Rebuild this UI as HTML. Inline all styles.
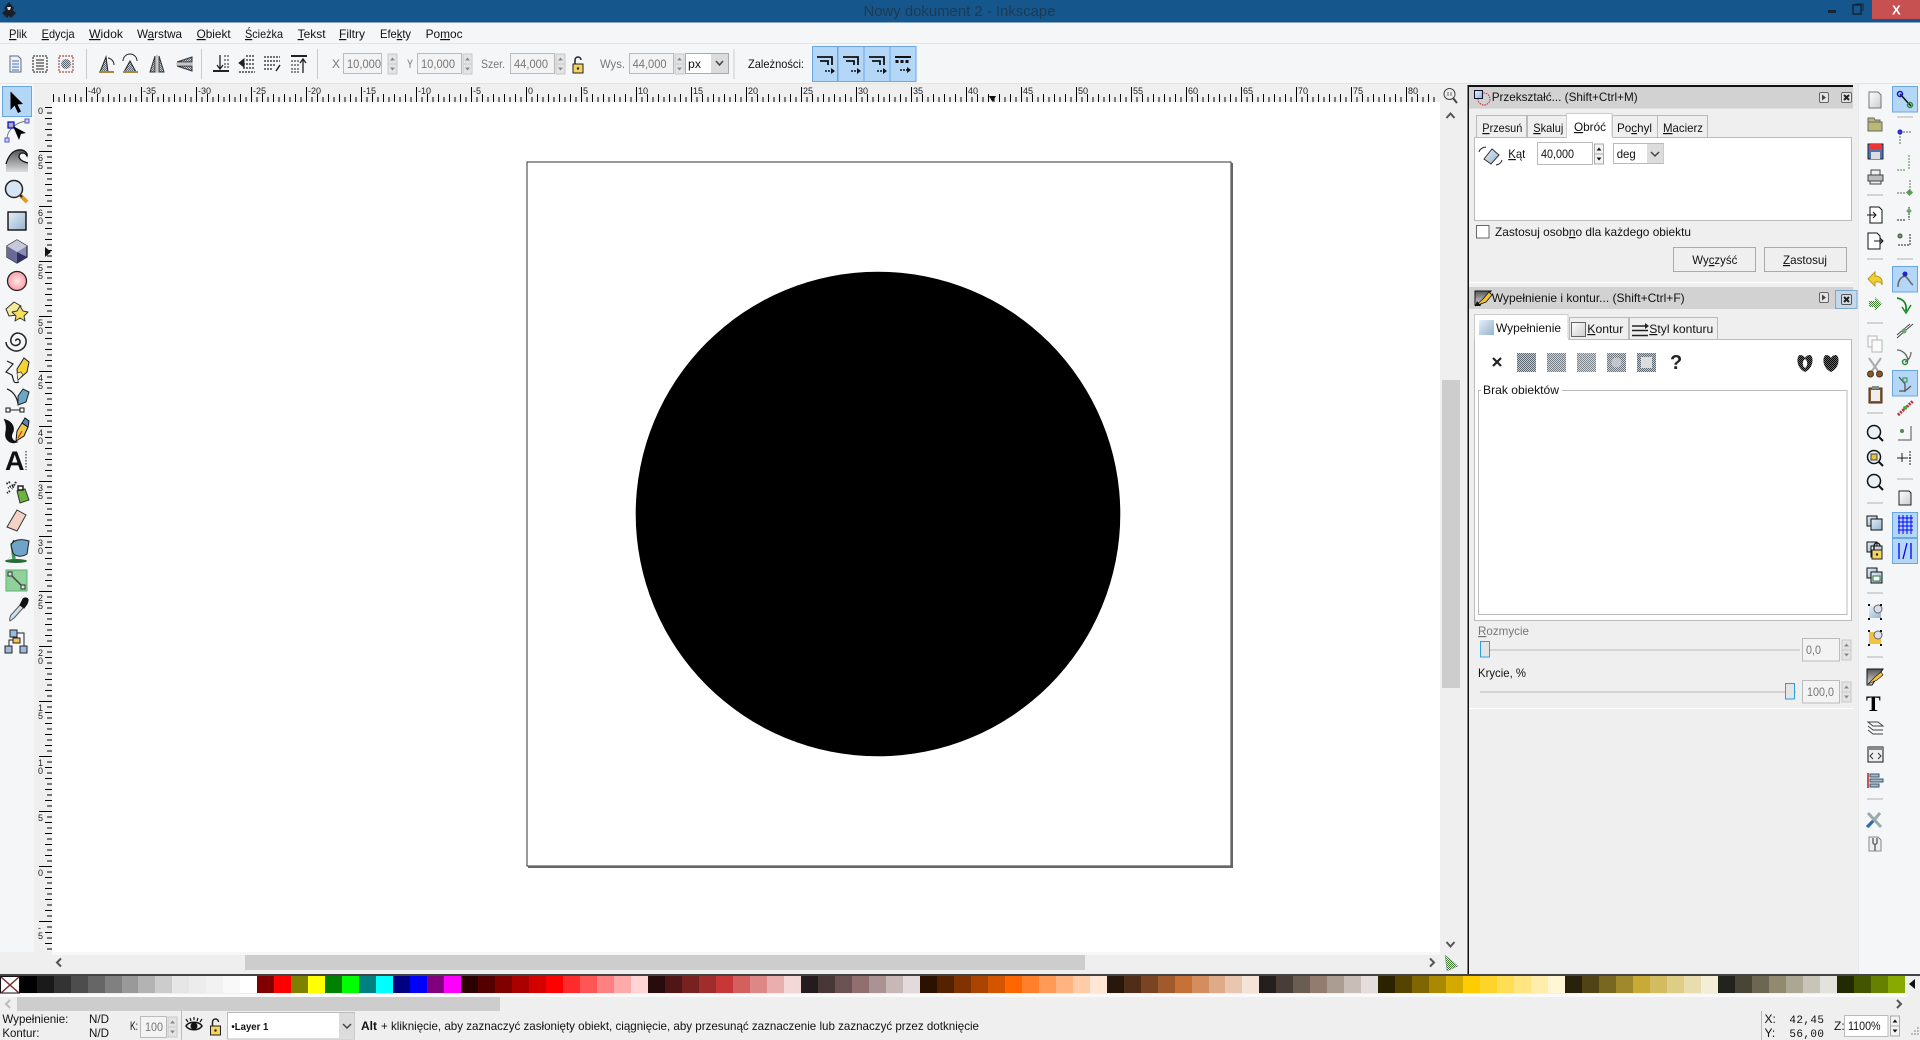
<!DOCTYPE html>
<html lang="pl"><head><meta charset="utf-8"><title>Nowy dokument 2 - Inkscape</title>
<style>
html,body{margin:0;padding:0;width:1920px;height:1040px;overflow:hidden;background:#efefef}
svg#m{position:absolute;left:0;top:0}
text{font-family:"Liberation Sans",sans-serif;font-size:12px;fill:#111;white-space:pre}
.g{fill:#777}
.r{font-size:9px;fill:#222}
.u{text-decoration:underline}
#p{position:absolute;left:19.6px;top:976px;width:1885px;height:17px;display:flex}
#p i{flex:1;display:block}
</style></head><body>
<svg id="m" width="1920" height="1040" viewBox="0 0 1920 1040" xmlns="http://www.w3.org/2000/svg">
<defs>
<pattern id="h" patternUnits="userSpaceOnUse" x="31" y="85" width="55" height="17"><path d="M.5 2V17M6 12V17M11.5 9V17M17 12V17M22.5 9V17M28 12V17M33.5 9V17M39 12V17M44.5 9V17M50 12V17" stroke="#000" fill="none" shape-rendering="crispEdges"/></pattern>
<pattern id="v" patternUnits="userSpaceOnUse" x="34" y="41" width="18" height="55"><path d="M5 .5H18M13 6H18M11 11.5H18M13 17H18M11 22.5H18M13 28H18M11 33.5H18M13 39H18M11 44.5H18M13 50H18" stroke="#000" fill="none" shape-rendering="crispEdges"/></pattern>
<pattern id="d" patternUnits="userSpaceOnUse" width="2" height="2"><rect width="2" height="2" fill="#c4ccd4"/><rect width="1" height="1" fill="#5c6670"/><rect x="1" y="1" width="1" height="1" fill="#5c6670"/></pattern>
<pattern id="d2" patternUnits="userSpaceOnUse" width="2" height="2"><rect width="2" height="2" fill="#666"/><rect width="1" height="1" fill="#000"/><rect x="1" y="1" width="1" height="1" fill="#000"/></pattern>
<pattern id="d3" patternUnits="userSpaceOnUse" width="2" height="2"><rect width="2" height="2" fill="#e8f0d8"/><rect width="1" height="1" fill="#3c7a2c"/><rect x="1" y="1" width="1" height="1" fill="#3c7a2c"/></pattern>
<linearGradient id="b" x1="0" y1="0" x2="1" y2="1"><stop offset="0" stop-color="#e6eff7"/><stop offset="1" stop-color="#94b3d0"/></linearGradient>
<linearGradient id="w" x1="0" y1="0" x2="1" y2="1"><stop offset="0" stop-color="#fff"/><stop offset="1" stop-color="#ccc"/></linearGradient>
<linearGradient id="k" x1="0" y1="0" x2="0" y2="1"><stop offset="0" stop-color="#555"/><stop offset="1" stop-color="#ddd"/></linearGradient>
<radialGradient id="pk"><stop offset="0" stop-color="#ffe6e8"/><stop offset="1" stop-color="#ff9ea8"/></radialGradient>
<g id="sp"><rect width="9" height="10" fill="#e4e4e4" stroke="#c8c8c8"/><rect y="10" width="9" height="10" fill="#e4e4e4" stroke="#c8c8c8"/><path d="M2 6.5L4.5 3.5L7 6.5ZM2 13.500L4.500 16.500L7 13.500Z" fill="#888"/></g>
<g id="sk"><rect width="9" height="10" fill="#f3f3f3" stroke="#aaa"/><rect y="10" width="9" height="10" fill="#f3f3f3" stroke="#aaa"/><path d="M2 6.500L4.500 3.500L7 6.500ZM2 13.500L4.500 16.500L7 13.500Z" fill="#111"/></g>
<g id="lk"><path d="M-3 -1V-5A3 3 0 0 1 3 -5" fill="none" stroke="#222" stroke-width="1.500"/><rect x="-5" y="-1" width="10" height="9" fill="#f4d35e" stroke="#222"/><circle cy="3.500" r="1.200" fill="#222"/></g>
<g id="sn"><path d="M-8 -7H7V1M-5 -3H3V1" fill="none" stroke="#111" stroke-width="1.800"/><path d="M0 7H6" stroke="#111" stroke-width="1.500" stroke-dasharray="2 1"/><path d="M6 4L10 7L6 10Z" fill="#111"/></g>
</defs>

<!-- title bar -->
<rect width="1920" height="22.500" fill="#15578c"/>
<rect x="1872" width="48" height="19" fill="#c75050"/>
<text x="1892" y="14.500" style="fill:#fff;font-size:13px;font-weight:bold">X</text>
<rect x="1828" y="10" width="8" height="3" fill="#15263a"/>
<rect x="1853" y="5" width="8" height="9" fill="none" stroke="#15263a" stroke-width="1.500"/><path d="M1855 4H1863V11" fill="none" stroke="#15263a"/>
<path d="M9 2L14 8L12.500 10L16 13L11 18L9 16L7 18L2 13L5.500 10L4 8Z" fill="#1a1f28"/><path d="M7 7H11L10 10H8Z" fill="#d8dde2"/>
<text x="863.500" y="16" textLength="192" lengthAdjust="spacingAndGlyphs" style="font-size:15px;fill:#1d3a54">Nowy dokument 2 - Inkscape</text>

<!-- menu + toolbar -->
<rect y="22.500" width="1920" height="62" fill="#f5f6f7"/>
<rect y="43" width="1920" height="1" fill="#e4e4e4"/>
<rect y="83" width="1920" height="1" fill="#e4e4e4"/>
<text x="9" y="38" textLength="18" lengthAdjust="spacingAndGlyphs"><tspan class="u">P</tspan>lik</text>
<text x="41.600" y="38" textLength="33" lengthAdjust="spacingAndGlyphs"><tspan class="u">E</tspan>dycja</text>
<text x="89" y="38" textLength="34" lengthAdjust="spacingAndGlyphs"><tspan class="u">W</tspan>idok</text>
<text x="137" y="38" textLength="45" lengthAdjust="spacingAndGlyphs">W<tspan class="u">a</tspan>rstwa</text>
<text x="196.600" y="38" textLength="34" lengthAdjust="spacingAndGlyphs"><tspan class="u">O</tspan>biekt</text>
<text x="245" y="38" textLength="38" lengthAdjust="spacingAndGlyphs"><tspan class="u">Ś</tspan>cieżka</text>
<text x="297.600" y="38" textLength="28" lengthAdjust="spacingAndGlyphs"><tspan class="u">T</tspan>ekst</text>
<text x="339" y="38" textLength="26" lengthAdjust="spacingAndGlyphs"><tspan class="u">F</tspan>iltry</text>
<text x="380" y="38" textLength="31" lengthAdjust="spacingAndGlyphs">Efe<tspan class="u">k</tspan>ty</text>
<text x="425.600" y="38" textLength="37" lengthAdjust="spacingAndGlyphs">Po<tspan class="u">m</tspan>oc</text>

<!-- toolbar icons -->
<g transform="translate(15,64)"><path d="M-5 -8H3L6 -5V8H-5Z" fill="#eef3fa" stroke="#667"/><path d="M-3 -3H4M-3 0H4M-3 3H4M-3 6H4" stroke="#3a6fb5"/></g>
<g transform="translate(40,64)"><rect x="-7" y="-8" width="14" height="16" fill="#f4f4f4" stroke="#111" stroke-dasharray="2 1"/><path d="M-4 -4H4M-4 -1H4M-4 2H4M-4 5H4" stroke="#666" stroke-width="1.500"/></g>
<g transform="translate(66,64)"><rect x="-7" y="-8" width="14" height="16" fill="#f4f4f4" stroke="#922" stroke-dasharray="2 1"/><circle r="5" fill="url(#d)"/></g>
<rect x="86" y="49" width="1" height="30" fill="#ccc"/>
<g transform="translate(106,64)"><path d="M-6 8L0 -7L2 8Z" fill="url(#d)" stroke="#222"/><path d="M-7 8H8" stroke="#a88a3a" stroke-width="2"/><path d="M2 -6A7 7 0 0 1 8 1" fill="none" stroke="#222"/></g>
<g transform="translate(130,64)"><path d="M-6 8L0 -3L6 8Z" fill="url(#d)" stroke="#222"/><path d="M-7 -3A7 7 0 0 1 7 -3" fill="none" stroke="#222"/><path d="M-7 8H8" stroke="#a88a3a" stroke-width="2"/></g>
<g transform="translate(157,64)"><path d="M-2 -8L-7 8H-2ZM2 -8L7 8H2Z" fill="url(#d)" stroke="#333"/><path d="M0 -9V9" stroke="#999"/></g>
<g transform="translate(184,64)"><path d="M8 -7L-7 -2H8ZM8 7L-7 2H8Z" fill="url(#d)" stroke="#333"/><path d="M-8 0H9" stroke="#999"/></g>
<rect x="201" y="49" width="1" height="30" fill="#ccc"/>
<g transform="translate(221,64)" stroke="#222" fill="none"><path d="M-8 7H8" stroke-width="2"/><path d="M-1 -9V4M-4 1L-1 5L2 1" stroke-width="1.300"/><path d="M3 -8H8M3 -4H8M3 0H8M3 3H8" stroke-dasharray="2 1"/></g>
<g transform="translate(247,64)" stroke="#222" fill="none"><path d="M-8 -1L-3 -5V3Z" fill="#222"/><path d="M-1 -8H8M-1 -4H8M-4 0H8M-4 4H8M-8 8H8" stroke-dasharray="2 1" stroke-width="1.300"/></g>
<g transform="translate(272,64)" stroke="#222" fill="none"><path d="M-8 -7H8M-8 -3H8M-8 1H4M-8 5H1" stroke-dasharray="2 1" stroke-width="1.300"/><path d="M8 1L4 7" stroke-width="1.500"/></g>
<g transform="translate(299,64)" stroke="#222" fill="none"><path d="M-8 -8H8" stroke-width="2"/><path d="M4 9V-4M1 -1L4 -5L7 -1" stroke-width="1.300"/><path d="M-8 -3H1M-8 1H1M-8 5H1M-8 8H1" stroke-dasharray="2 1"/></g>
<rect x="317" y="49" width="1" height="30" fill="#ccc"/>

<text x="332" y="68" class="g" textLength="8" lengthAdjust="spacingAndGlyphs">X</text>
<rect x="343.500" y="53.500" width="38" height="20" fill="#f3f3f3" stroke="#bbb"/>
<text x="347" y="68" class="g" textLength="34" lengthAdjust="spacingAndGlyphs">10,000</text>
<use href="#sp" x="388" y="54"/>
<text x="407" y="68" class="g" textLength="6" lengthAdjust="spacingAndGlyphs">Y</text>
<rect x="417.500" y="53.500" width="44" height="20" fill="#f3f3f3" stroke="#bbb"/>
<text x="421" y="68" class="g" textLength="34" lengthAdjust="spacingAndGlyphs">10,000</text>
<use href="#sp" x="463" y="54"/>
<text x="481" y="68" class="g" textLength="24" lengthAdjust="spacingAndGlyphs">Szer.</text>
<rect x="510.500" y="53.500" width="44" height="20" fill="#f3f3f3" stroke="#bbb"/>
<text x="514" y="68" class="g" textLength="34" lengthAdjust="spacingAndGlyphs">44,000</text>
<use href="#sp" x="556" y="54"/>
<use href="#lk" x="578" y="65"/>
<text x="600" y="68" class="g" textLength="25" lengthAdjust="spacingAndGlyphs">Wys.</text>
<rect x="629.500" y="53.500" width="44" height="20" fill="#f3f3f3" stroke="#bbb"/>
<text x="632.600" y="68" class="g" textLength="34" lengthAdjust="spacingAndGlyphs">44,000</text>
<use href="#sp" x="675" y="54"/>
<rect x="685.500" y="53.500" width="43" height="20" fill="#fff" stroke="#aaa"/>
<rect x="711" y="54" width="17" height="19" fill="#dcdcdc"/>
<path d="M716 61L719.500 65L723 61" fill="none" stroke="#444" stroke-width="1.500"/>
<text x="688" y="68" textLength="13" lengthAdjust="spacingAndGlyphs">px</text>
<rect x="733.500" y="49" width="1" height="30" fill="#ccc"/>
<text x="748" y="68" textLength="56" lengthAdjust="spacingAndGlyphs">Zależności:</text>
<g fill="#b5d7f7" stroke="#69a7e3"><rect x="812.500" y="46.500" width="25" height="35"/><rect x="838" y="46.500" width="26" height="35"/><rect x="864" y="46.500" width="26" height="35"/><rect x="890" y="46.500" width="26" height="35"/></g>
<use href="#sn" x="825" y="64"/><use href="#sn" x="851" y="64"/><use href="#sn" x="877" y="64"/>
<g transform="translate(903,64)"><path d="M-8 -7H8" stroke="#111" stroke-width="2"/><path d="M-6 -4V-1M-1 -4V-1M4 -4V-1" stroke="#111" stroke-width="3"/><path d="M-3 6H4" stroke="#111" stroke-width="1.500" stroke-dasharray="2 1"/><path d="M4 3L8 6L4 9Z" fill="#111"/></g>

<!-- left toolbar -->
<rect y="84" width="34" height="868" fill="#f5f6f7"/>
<rect y="952" width="34" height="22" fill="#efefef"/>
<rect x="2.500" y="86.500" width="29" height="30" fill="#b5d7f7" stroke="#69a7e3"/>

<!-- rulers / canvas -->
<rect x="34" y="84" width="1406" height="18" fill="#efefef"/>
<rect x="34" y="84" width="18" height="868" fill="#efefef"/>
<rect x="52" y="102" width="1388" height="850" fill="#fff"/>
<rect x="52" y="85" width="1385" height="17" fill="url(#h)"/>
<rect x="34" y="103" width="18" height="849" fill="url(#v)"/>
<path d="M989 96H996L992.500 102Z" fill="#111"/>
<path d="M45 247L51 252L45 257Z" fill="#111"/>
<g>
<text class="r" x="88" y="94">-40</text><text class="r" x="143" y="94">-35</text><text class="r" x="198" y="94">-30</text><text class="r" x="253" y="94">-25</text><text class="r" x="308" y="94">-20</text><text class="r" x="363" y="94">-15</text><text class="r" x="418" y="94">-10</text><text class="r" x="473" y="94">-5</text><text class="r" x="528" y="94">0</text><text class="r" x="583" y="94">5</text><text class="r" x="638" y="94">10</text><text class="r" x="693" y="94">15</text><text class="r" x="748" y="94">20</text><text class="r" x="803" y="94">25</text><text class="r" x="858" y="94">30</text><text class="r" x="913" y="94">35</text><text class="r" x="968" y="94">40</text><text class="r" x="1023" y="94">45</text><text class="r" x="1078" y="94">50</text><text class="r" x="1133" y="94">55</text><text class="r" x="1188" y="94">60</text><text class="r" x="1243" y="94">65</text><text class="r" x="1298" y="94">70</text><text class="r" x="1353" y="94">75</text><text class="r" x="1408" y="94">80</text>
</g>
<g>
<text class="r" x="38" y="114">0</text>
<text class="r" x="38" y="161">6</text><text class="r" x="38" y="169">5</text>
<text class="r" x="38" y="216">6</text><text class="r" x="38" y="224">0</text>
<text class="r" x="38" y="271">5</text><text class="r" x="38" y="279">5</text>
<text class="r" x="38" y="326">5</text><text class="r" x="38" y="334">0</text>
<text class="r" x="38" y="381">4</text><text class="r" x="38" y="389">5</text>
<text class="r" x="38" y="436">4</text><text class="r" x="38" y="444">0</text>
<text class="r" x="38" y="491">3</text><text class="r" x="38" y="499">5</text>
<text class="r" x="38" y="546">3</text><text class="r" x="38" y="554">0</text>
<text class="r" x="38" y="601">2</text><text class="r" x="38" y="609">5</text>
<text class="r" x="38" y="656">2</text><text class="r" x="38" y="664">0</text>
<text class="r" x="38" y="711">1</text><text class="r" x="38" y="719">5</text>
<text class="r" x="38" y="766">1</text><text class="r" x="38" y="774">0</text>
<text class="r" x="38" y="821">5</text>
<text class="r" x="38" y="876">0</text>
<text class="r" x="38" y="931">-</text><text class="r" x="38" y="939">5</text>
</g>

<!-- page + circle -->
<rect x="527" y="162" width="704" height="704" fill="#fff" stroke="#333"/>
<path d="M528 867H1232V163" fill="none" stroke="#666" stroke-width="2"/>
<circle cx="878" cy="514" r="242.300" fill="#000"/>

<!-- canvas scrollbars -->
<rect x="1440" y="84" width="28" height="890" fill="#efefef"/>
<g transform="translate(1450,95)"><circle cx="-.500" cy="-1" r="5.500" fill="#eee" stroke="#444"/><path d="M3 3L7 8" stroke="#444" stroke-width="2"/><path d="M-2 -3V1M1 -3V1" stroke="#444" stroke-width=".8"/></g>
<path d="M1446.500 118L1450.500 113.500L1454.500 118" fill="none" stroke="#555" stroke-width="2"/>
<rect x="1442" y="380" width="18" height="308" fill="#cdcdcd"/>
<path d="M1446.500 942L1450.500 946.500L1454.500 942" fill="none" stroke="#555" stroke-width="2"/>
<rect y="952" x="52" width="1388" height="3" fill="#f7f7f7"/>
<rect y="955" x="34" width="1406" height="19" fill="#efefef"/>
<rect x="245" y="955" width="840" height="15" fill="#cdcdcd"/>
<path d="M61 958.500L57 962.500L61 966.500" fill="none" stroke="#555" stroke-width="2"/>
<path d="M1430 958.500L1434 962.500L1430 966.500" fill="none" stroke="#555" stroke-width="2"/>
<path d="M1445 955L1458 966L1447 971Z" fill="url(#d3)" stroke="#789" stroke-width=".5"/>

<!-- dock -->
<rect x="1469" y="85" width="390" height="889" fill="#efefef"/>
<rect x="1859" y="84" width="61" height="890" fill="#f5f6f7"/>
<rect x="1858" y="84" width="1" height="890" fill="#e8e8e8"/>
<rect x="1468" y="85" width="385" height="2" fill="#111"/>
<rect x="1467.500" y="85" width="1.500" height="889" fill="#111"/>
<rect x="1469" y="87" width="384" height="21.500" fill="#d2d2d2"/>
<g transform="translate(1474,90)"><circle cx="10" cy="9" r="6" fill="none" stroke="#c22" stroke-dasharray="1.500 1"/><rect x=".5" y=".5" width="8" height="8" fill="url(#b)" stroke="#113"/></g>
<text x="1491.700" y="101" textLength="146" lengthAdjust="spacingAndGlyphs">Przekształć... (Shift+Ctrl+M)</text>
<g transform="translate(1819,92)"><rect x=".5" y=".5" width="9" height="10" rx="1.500" fill="#e4e4e4" stroke="#666"/><path d="M3 2.500L7 5.500L3 8.500Z" fill="#444"/></g>
<g transform="translate(1841,92)"><rect x=".5" y=".5" width="10" height="10" rx="1.500" fill="#e4e4e4" stroke="#666"/><path d="M3 3L8 8M8 3L3 8" stroke="#222" stroke-width="2"/></g>

<!-- transform tabs -->
<g fill="#efefef" stroke="#bbb">
<rect x="1476.500" y="115.500" width="50" height="22"/><rect x="1527.500" y="115.500" width="39" height="22"/><rect x="1612.500" y="115.500" width="45" height="22"/><rect x="1657.500" y="115.500" width="50" height="22"/>
</g>
<rect x="1474.500" y="137.500" width="377" height="83" fill="#fff" stroke="#bbb"/>
<path d="M1566.500 138V113.500H1612V138" fill="#fff" stroke="#ccc"/><rect x="1567" y="136" width="45" height="3" fill="#fff"/>
<text x="1482.300" y="132" textLength="40" lengthAdjust="spacingAndGlyphs"><tspan class="u">P</tspan>rzesuń</text>
<text x="1533.300" y="132" textLength="30" lengthAdjust="spacingAndGlyphs"><tspan class="u">S</tspan>kaluj</text>
<text x="1574" y="131" textLength="32" lengthAdjust="spacingAndGlyphs"><tspan class="u">O</tspan>bróć</text>
<text x="1617" y="132" textLength="35" lengthAdjust="spacingAndGlyphs">Po<tspan class="u">c</tspan>hyl</text>
<text x="1663" y="132" textLength="40" lengthAdjust="spacingAndGlyphs"><tspan class="u">M</tspan>acierz</text>
<g transform="translate(1490,156)"><path d="M-6 3L2 -7L9 -1L1 8Z" fill="url(#b)" stroke="#333"/><path d="M-11 -4A8 6 0 0 1 -4 -9M6 9A8 6 0 0 0 12 4" fill="none" stroke="#222"/></g>
<text x="1508.300" y="158" textLength="17" lengthAdjust="spacingAndGlyphs"><tspan class="u">K</tspan>ąt</text>
<rect x="1537.500" y="142.500" width="55" height="22" fill="#fff" stroke="#bbb"/>
<text x="1541" y="158" textLength="33" lengthAdjust="spacingAndGlyphs">40,000</text>
<use href="#sk" x="1594.500" y="144"/>
<rect x="1613.500" y="143.500" width="50" height="20" fill="#fff" stroke="#bbb"/><rect x="1647" y="144" width="16.500" height="19" fill="#dcdcdc"/>
<path d="M1651 152L1655 156L1659 152" fill="none" stroke="#444" stroke-width="1.500"/>
<text x="1616.700" y="158" textLength="19" lengthAdjust="spacingAndGlyphs">deg</text>
<rect x="1476.500" y="225.500" width="12.500" height="12.500" fill="#fff" stroke="#666"/>
<text x="1495" y="236" textLength="196" lengthAdjust="spacingAndGlyphs">Zastosuj osob<tspan class="u">n</tspan>o dla każdego obiektu</text>
<rect x="1673.500" y="247.500" width="82" height="24" fill="#efefef" stroke="#aaa"/>
<rect x="1764.500" y="247.500" width="82" height="24" fill="#efefef" stroke="#aaa"/>
<text x="1692.300" y="264" textLength="45" lengthAdjust="spacingAndGlyphs">Wy<tspan class="u">c</tspan>zyść</text>
<text x="1783" y="264" textLength="44" lengthAdjust="spacingAndGlyphs"><tspan class="u">Z</tspan>astosuj</text>

<!-- fill & stroke -->
<rect x="1469" y="282" width="384" height="1" fill="#fff"/>
<rect x="1469" y="287" width="384" height="22" fill="#d2d2d2"/>
<g transform="translate(1483,298)"><path d="M-8 -7H8L-3 7H-8Z" fill="url(#k)" stroke="#111"/><path d="M-8 8L0 1L6 -6L9 -3L3 4Z" fill="#f5c23a" stroke="#111" stroke-width=".8"/><path d="M-8 8H-2L-6 3Z" fill="#111"/></g>
<text x="1491.700" y="302" textLength="193" lengthAdjust="spacingAndGlyphs">Wypełnienie i kontur... (Shift+Ctrl+F)</text>
<g transform="translate(1819,292)"><rect x=".5" y=".5" width="9" height="10" rx="1.500" fill="#e4e4e4" stroke="#666"/><path d="M3 2.500L7 5.500L3 8.500Z" fill="#444"/></g>
<rect x="1835.500" y="290.500" width="21.500" height="18" fill="#c3d8ea" stroke="#7aa7d0"/>
<g transform="translate(1841,294)"><rect x=".5" y=".5" width="10" height="10" rx="1.500" fill="#d5dde4" stroke="#555"/><path d="M3 3L8 8M8 3L3 8" stroke="#222" stroke-width="2"/></g>

<g fill="#efefef" stroke="#bbb"><rect x="1569.500" y="317.500" width="59" height="22"/><rect x="1629.500" y="317.500" width="88" height="22"/></g>
<rect x="1474.500" y="339.500" width="377" height="281" fill="#fff" stroke="#bbb"/>
<path d="M1474.500 340V314.500H1568V340" fill="#fff" stroke="#ccc"/><rect x="1475" y="338" width="93" height="3" fill="#fff"/>
<rect x="1479" y="320" width="15" height="15" fill="url(#b)"/>
<text x="1496" y="332" textLength="65" lengthAdjust="spacingAndGlyphs">Wypełnienie</text>
<rect x="1571.500" y="322.500" width="14" height="14" fill="url(#w)" stroke="#666"/>
<text x="1587.300" y="333" textLength="36" lengthAdjust="spacingAndGlyphs"><tspan class="u">K</tspan>ontur</text>
<path d="M1632 326H1646M1632 330.500H1648M1632 335.500H1648" stroke="#222" stroke-width="1.400"/><path d="M1645 323V329L1649 326Z" fill="#222"/>
<text x="1649.300" y="333" textLength="64" lengthAdjust="spacingAndGlyphs"><tspan class="u">S</tspan>tyl konturu</text>
<path d="M1493 358L1501 366M1501 358L1493 366" stroke="#222" stroke-width="2.200"/>
<rect x="1517" y="353" width="19" height="19" fill="url(#d)"/>
<rect x="1547" y="353" width="19" height="19" fill="url(#d)" opacity=".85"/>
<rect x="1577" y="353" width="19" height="19" fill="url(#d)" opacity=".8"/>
<rect x="1607" y="353" width="19" height="19" fill="url(#d)" opacity=".9"/><circle cx="1616.500" cy="362.500" r="5" fill="#d8dce0" opacity=".6"/>
<rect x="1637" y="353" width="19" height="19" fill="url(#d)"/><rect x="1641" y="357" width="11" height="11" fill="#ddd"/>
<text x="1670" y="369" style="font-size:20px;font-weight:bold;fill:#222">?</text>
<path d="M1805 372C1796 368 1796 356 1800 355C1802 355 1804 356 1805 358C1806 356 1808 355 1810 355C1814 356 1814 368 1805 372Z" fill="url(#d2)"/><path d="M1805 368C1802 366 1802 361 1805 359C1808 361 1808 366 1805 368Z" fill="#fff"/>
<path d="M1831 372C1822 368 1822 356 1826 355C1828 355 1830 356 1831 358C1832 356 1834 355 1836 355C1840 356 1840 368 1831 372Z" fill="url(#d2)"/>
<rect x="1478.500" y="390.500" width="368.500" height="224" fill="#fff" stroke="#bbb"/>
<rect x="1481" y="386" width="81" height="10" fill="#fff"/>
<text x="1483" y="394" textLength="76" lengthAdjust="spacingAndGlyphs">Brak obiektów</text>

<rect x="1469" y="622" width="384" height="86" fill="#efefef"/>
<text x="1478" y="635" class="g" textLength="51" lengthAdjust="spacingAndGlyphs"><tspan class="u">R</tspan>ozmycie</text>
<rect x="1480" y="649" width="320" height="2" fill="#d4d4d4"/>
<rect x="1480.500" y="641.500" width="9" height="15.500" fill="#e4e4e4" stroke="#2a9fdc"/>
<rect x="1802.500" y="638.500" width="37" height="22.500" fill="#f3f3f3" stroke="#bbb"/>
<text x="1806" y="654" class="g" textLength="15" lengthAdjust="spacingAndGlyphs">0,0</text>
<use href="#sp" x="1842" y="640"/>
<text x="1478" y="677" textLength="48" lengthAdjust="spacingAndGlyphs">Krycie, %</text>
<rect x="1480" y="691" width="316" height="2" fill="#d4d4d4"/>
<rect x="1785.500" y="683.500" width="9" height="15.500" fill="#e4e4e4" stroke="#2a9fdc"/>
<rect x="1802.500" y="680.500" width="37" height="22.500" fill="#f3f3f3" stroke="#bbb"/>
<text x="1807" y="696" class="g" textLength="27" lengthAdjust="spacingAndGlyphs">100,0</text>
<use href="#sp" x="1842" y="682"/>
<rect x="1469" y="708" width="384" height="1" fill="#fff"/>

<!-- left tool icons -->
<path d="M10.500 91.500V110L14.500 105.500L18 113L21 111.500L17.500 104.500L23 104Z" fill="#000"/>
<g><path d="M7 139C7 130 16 122 27 121" fill="none" stroke="#777"/><rect x="8" y="122" width="6" height="6" fill="#aab" stroke="#00c" stroke-width="1.200"/><rect x="25" y="119" width="4" height="4" fill="#ccf" stroke="#55c"/><rect x="5" y="138" width="4" height="4" fill="#ccf" stroke="#55c"/><path d="M13 126L26 133L21 134L19 140Z" fill="#000"/></g>
<g><path d="M6 172V164C8 157 12 151 18 150C24 149 28 153 27 156C25 152 20 152 19 156C19 160 24 162 28 163V172Z" fill="url(#k)"/><path d="M6 164C8 157 12 151 18 150C24 149 28 153 27 156C25 152 20 152 19 156C19 160 24 162 28 163" fill="none" stroke="#111" stroke-width="1.300"/></g>
<g><circle cx="14" cy="189" r="8.500" fill="#d5e5f2" stroke="#222" stroke-width="1.500"/><path d="M20 195L27 202" stroke="#e49a1c" stroke-width="4"/><path d="M20 195L22 197" stroke="#222" stroke-width="2"/></g>
<rect x="8" y="212" width="18" height="18" fill="url(#b)" stroke="#000" stroke-width="1.300"/>
<g><path d="M17 240L27 246V257L17 263L7 257V246Z" fill="#8a8ab8" stroke="#333" stroke-width="1.300"/><path d="M7 246L17 252V263L7 257Z" fill="#6a6a98"/><path d="M17 240L27 246L17 252L7 246Z" fill="#c8c8dc"/><path d="M17 252L27 257L17 263Z" fill="#2f2f66"/></g>
<circle cx="17" cy="281" r="9.500" fill="url(#pk)" stroke="#222" stroke-width="1.300"/>
<g stroke="#333" stroke-linejoin="round"><path d="M6 309L14 302L21 306L18 315L9 316Z" fill="#f6eb9c"/><path d="M20 306L23 311L28 312L24 316L25 321L20 318L15 321L16 316L12 312L17 311Z" fill="#f6df5b"/></g>
<path d="M16 341C15 339 19 338 20 341C21 345 15 347 12 344C9 340 12 334 17 333C23 333 27 338 26 343C25 349 18 353 12 350C8 348 6 345 6 342" fill="none" stroke="#222" stroke-width="1.500"/>
<g><path d="M7 361L13 364L6 372L12 375C14 381 13 384 19 382" fill="none" stroke="#222" stroke-width="1.200"/><path d="M18 380L17 369L24 358L29 362L27 372Z" fill="#f6d335" stroke="#222"/><path d="M18 380L23 375L21 372L17 373Z" fill="#f9f3c9" stroke="#222" stroke-width=".6"/></g>
<g><path d="M7 389C13 391 17 397 18 404" fill="none" stroke="#222" stroke-width="1.200"/><path d="M8 410H21" fill="none" stroke="#222"/><rect x="6" y="408" width="4" height="4" fill="#fff" stroke="#111"/><rect x="20" y="408" width="4" height="4" fill="#fff" stroke="#111"/><path d="M18 405L18 396L23 389L29 392L26 402Z" fill="#6aa7c8" stroke="#222"/></g>
<g><path d="M5 420C12 422 15 428 12 433C10 437 12 441 16 442C10 444 5 439 6 433C7 428 7 424 5 420Z" fill="#111" stroke="#111" stroke-width="1.500"/><path d="M16 441L17 431L22 423L28 427L24 436Z" fill="#f0c84a" stroke="#111"/><path d="M22 423L25 418L29 421L28 427Z" fill="#5588b8" stroke="#111"/><path d="M18 438L22 431" stroke="#c22"/></g>
<text x="5" y="470" style="font-size:27px;font-weight:bold;fill:#111">A</text>
<path d="M26 451V470" stroke="#111" stroke-dasharray="1.500 1.500"/>
<g><path d="M10 482L6 484M13 485L8 488M16 482L12 489M10 491L7 493" stroke="#222" stroke-width="2" stroke-dasharray="1.500 1"/><path d="M17 491L25 489L29 500L20 503Z" fill="#6cb33e" stroke="#333"/><path d="M18 486H23V490H18Z" fill="none" stroke="#222" stroke-width="1.500"/></g>
<path d="M17 510L26 515L17 531L7 527Z" fill="#f4d2c6" stroke="#333"/>
<g><ellipse cx="16" cy="561" rx="11" ry="2" fill="#2a6a3a"/><path d="M12 543L14 559" stroke="#3d9a55" stroke-width="3.500"/><path d="M11 545C13 540 21 538 29 541L27 554C21 558 15 556 13 553Z" fill="#6fa4c9" stroke="#222"/><path d="M11 545L14 540" stroke="#222"/></g>
<g><rect x="6" y="570" width="21" height="21" fill="#8fd09b" stroke="#5ab26b"/><path d="M10 574L23 587" stroke="#444" stroke-width="1.500"/><rect x="8" y="572" width="4" height="4" fill="#ddd" stroke="#333"/><rect x="21" y="585" width="4" height="4" fill="#ddd" stroke="#333"/></g>
<g><path d="M10 621C9 619 10 617 11 615L21 604L24 607L14 618Z" fill="#cde0ee" stroke="#555"/><path d="M20 605L23 599C25 597 29 598 28 601L27 604L24 608Z" fill="#111" stroke="#111"/></g>
<g><rect x="10" y="630" width="7" height="7" fill="#9dbbd6" stroke="#223"/><rect x="5" y="646" width="7" height="7" fill="#9dbbd6" stroke="#223"/><rect x="20" y="646" width="7" height="7" fill="#9dbbd6" stroke="#223"/><rect x="13" y="638" width="7" height="5" fill="#f3c948" stroke="#223"/><path d="M17 633H24V646M9 646V640H13" fill="none" stroke="#222"/></g>

<!-- commands bar -->
<g stroke="#b0b0b0"><path d="M1867 195H1883M1867 259H1883M1867 323H1883M1867 413H1883M1867 503H1883M1867 593H1883M1867 657H1883M1867 799H1883"/></g>
<path d="M1869 92H1878L1881 95V108H1869Z" fill="url(#w)" stroke="#777"/>
<path d="M1868 122H1882V131H1868ZM1868 122V118H1874L1875 120H1880V122" fill="#bbb870" stroke="#667"/>
<g><rect x="1868" y="144" width="15" height="15" fill="#4d75ad" stroke="#223"/><rect x="1870" y="144" width="11" height="5" fill="#e33"/><rect x="1871" y="152" width="9" height="7" fill="#ddd"/></g>
<g><rect x="1871" y="170" width="9" height="6" fill="#eee" stroke="#444"/><rect x="1868" y="175" width="15" height="6" fill="#bbb" stroke="#444"/><rect x="1870" y="181" width="11" height="3" fill="#eee" stroke="#444"/></g>
<g><path d="M1870 207H1879L1882 210V223H1870Z" fill="#fff" stroke="#111"/><path d="M1867 215H1876M1873 212L1876 215L1873 218" fill="none" stroke="#111"/></g>
<g><path d="M1868 233H1877L1880 236V249H1868Z" fill="#fff" stroke="#111"/><path d="M1874 241H1883M1880 238L1883 241L1880 244" fill="none" stroke="#111"/></g>
<path d="M1868 279L1875 272V276C1880 276 1883 279 1882 285C1881 281 1878 282 1875 282V286Z" fill="#f1cf35" stroke="#b89a20"/>
<path d="M1882 304L1875 297V301H1869V307H1875V311Z" fill="url(#d3)"/>
<g opacity=".5"><rect x="1868" y="336" width="9" height="11" fill="#fff" stroke="#777"/><rect x="1872" y="340" width="10" height="12" fill="#fff" stroke="#777"/></g>
<g><path d="M1869 358L1878 371M1881 358L1872 371" stroke="#aaa" stroke-width="2"/><circle cx="1870.500" cy="374" r="3" fill="#8a5a20" stroke="#432"/><circle cx="1879.500" cy="374" r="3" fill="#8a5a20" stroke="#432"/></g>
<g><rect x="1869" y="388" width="13" height="15" fill="#8a5a2a" stroke="#432"/><rect x="1871" y="390" width="9" height="11" fill="#eee"/><rect x="1872" y="386" width="7" height="3" fill="#888"/></g>
<g fill="#e8f0f8" stroke="#111" stroke-width="1.500"><circle cx="1874" cy="432" r="6.500"/><circle cx="1874" cy="457" r="6.500"/><circle cx="1874" cy="481" r="6.500"/></g><path d="M1879 437L1883 441M1879 462L1883 466M1879 486L1883 490" stroke="#111" stroke-width="2"/><rect x="1871" y="454" width="6" height="6" fill="#e9c43a" stroke="#444"/>
<g stroke="#111"><rect x="1867" y="516" width="10" height="10" fill="url(#b)"/><rect x="1871" y="519" width="11" height="11" fill="url(#b)"/></g>
<g stroke="#111"><rect x="1867" y="542" width="10" height="10" fill="url(#b)"/><rect x="1871" y="546" width="11" height="11" fill="url(#b)"/></g><use href="#lk" x="1877" y="551"/>
<g stroke="#111"><rect x="1867" y="568" width="10" height="10" fill="url(#b)"/><rect x="1871" y="572" width="11" height="11" fill="url(#b)"/></g><rect x="1873" y="576" width="7" height="5" fill="#fff" stroke="#2a7a3a"/>
<g><rect x="1869" y="606" width="12" height="12" fill="url(#b)" stroke="none"/><circle cx="1878" cy="609" r="4" fill="#dde" stroke="#666"/><path d="M1868 604H1870V606H1868ZM1880 604H1882V606H1880ZM1868 618H1870V620H1868ZM1880 618H1882V620H1880Z" fill="#111"/></g>
<g><rect x="1869" y="632" width="12" height="12" fill="#f0c442" stroke="none"/><circle cx="1878" cy="635" r="4" fill="#dde" stroke="#666"/><path d="M1868 630H1870V632H1868ZM1880 630H1882V632H1880ZM1868 644H1870V646H1868ZM1880 644H1882V646H1880Z" fill="#111"/></g>
<g transform="translate(1875,677)"><path d="M-8 -8H8L-3 8H-8Z" fill="url(#k)" stroke="#111"/><path d="M-7 7L0 0L6 -5L8 -2L2 3Z" fill="#f5c23a" stroke="#111" stroke-width=".6"/></g>
<text x="1866" y="711" style="font-size:22px;font-weight:bold;font-family:'Liberation Serif',serif;fill:#000">T</text>
<g fill="none" stroke="#444"><path d="M1868 722L1878 722L1883 726L1873 726ZM1868 726L1873 730L1883 730M1868 730L1873 734L1883 734"/></g>
<g><rect x="1868" y="747" width="15" height="15" fill="#eee" stroke="#111"/><rect x="1868" y="747" width="15" height="3" fill="#888"/><path d="M1873 753L1870 756L1873 759M1878 753L1881 756L1878 759" fill="none" stroke="#333"/></g>
<g><path d="M1868 773V788" stroke="#a22" stroke-width="1.500"/><rect x="1870" y="774" width="9" height="3" fill="#9dbbd6" stroke="#456"/><rect x="1870" y="779" width="13" height="3" fill="#9dbbd6" stroke="#456"/><rect x="1870" y="784" width="9" height="3" fill="#9dbbd6" stroke="#456"/></g>
<g><path d="M1880 813L1868 827M1868 813L1881 827" stroke="#9aa" stroke-width="3"/><path d="M1867 827L1873 821" stroke="#2a68b0" stroke-width="3"/></g>
<g><path d="M1869 837H1878L1881 840V851H1869Z" fill="#eee" stroke="#888"/><path d="M1873 838V843L1875 845L1877 843V838M1875 845V851" fill="none" stroke="#666" stroke-width="1.500"/></g>

<!-- snap bar -->
<g fill="#b5d7f7" stroke="#69a7e3"><rect x="1892.500" y="86.500" width="25" height="25.500"/><rect x="1892.500" y="266.500" width="25" height="25.500"/><rect x="1892.500" y="370.500" width="25" height="25.500"/><rect x="1892.500" y="512.500" width="25" height="25"/><rect x="1892.500" y="538.500" width="25" height="25"/></g>
<g stroke="#b0b0b0"><path d="M1897 117H1913M1897 259H1913M1897 479H1913"/></g>
<g fill="none"><path d="M1900 94L1911 106" stroke="#111" stroke-width="1.500"/><circle cx="1900" cy="94" r="2.500" stroke="#11c" stroke-width="1.500"/><circle cx="1910" cy="105" r="2.500" stroke="#2a8a3a" stroke-width="1.500"/></g>
<g fill="none" stroke="#666"><path d="M1900 132H1912M1900 133V145" stroke-dasharray="2 1"/><circle cx="1900" cy="132" r="2" stroke="#11c" fill="#44c"/></g>
<path d="M1897 170H1906M1909 155V170" fill="none" stroke="#4a8a4a" stroke-dasharray="2 1"/>
<path d="M1897 193H1906M1910 180V191" fill="none" stroke="#666" stroke-dasharray="2 1"/><rect x="1907" y="190" width="5" height="5" fill="#5a9a5a" transform="rotate(45 1909.500 192.500)"/>
<path d="M1897 220H1906M1909 207V220" fill="none" stroke="#222" stroke-dasharray="2 1"/><rect x="1907" y="209" width="4" height="4" fill="#6a6" transform="rotate(45 1909 211)"/>
<path d="M1898 245H1910V233" fill="none" stroke="#222" stroke-dasharray="2 1"/><circle cx="1900" cy="236" r="2" fill="#6a6" stroke="#444"/>
<path d="M1898 287C1898 280 1901 277 1905 276C1909 279 1910 283 1913 285" fill="none" stroke="#666" stroke-width="1.500"/><circle cx="1905" cy="274" r="2.500" fill="#22c"/>
<path d="M1897 298C1903 299 1907 303 1906 311" fill="none" stroke="#1a8a2a" stroke-width="1.800"/><path d="M1902 307L1906 313L1911 305" fill="none" stroke="#1a8a2a" stroke-width="1.500"/>
<path d="M1897 338L1913 324M1897 335L1910 324" stroke="#444"/><circle cx="1904" cy="331" r="2.500" fill="#6a6"/>
<path d="M1897 350C1902 350 1907 354 1908 360M1911 352C1911 356 1909 360 1905 362" fill="none" stroke="#666" stroke-width="1.300"/><circle cx="1905" cy="362" r="2.500" fill="none" stroke="#2a8a3a" stroke-width="1.500"/>
<path d="M1899 377L1905 384V391L1911 386M1899 391H1905" fill="none" stroke="#555" stroke-width="1.300"/><rect x="1903" y="378" width="4" height="4" fill="none" stroke="#2a8a3a"/>
<path d="M1898 415L1913 401" stroke="#b33" stroke-width="3" stroke-dasharray="2 1"/><circle cx="1905" cy="408" r="2" fill="#4a4"/>
<path d="M1898 440H1911V426" fill="none" stroke="#888" stroke-width="1.500"/><circle cx="1902" cy="431" r="2" fill="#4a8a4a"/>
<path d="M1897 458H1912M1910 451V465" fill="none" stroke="#222" stroke-dasharray="2 1"/><path d="M1902 453V462M1898 458H1906" stroke="#222"/>
<path d="M1899 491H1909L1911 493V505H1899Z" fill="url(#w)" stroke="#222"/>
<path d="M1898 518H1913M1898 522H1913M1898 526H1913M1898 530H1913M1899 515V534M1903 515V534M1907 515V534M1911 515V534" stroke="#00f"/>
<path d="M1899 543V559M1911 543V559M1903 559L1907 543" stroke="#00f" stroke-width="1.300"/>

<!-- palette zone -->
<rect y="974" width="1920" height="2" fill="#444"/>
<rect y="976" width="1920" height="35" fill="#efefef"/>
<rect y="994" width="1907" height="3" fill="#fafafa"/>
<rect x=".5" y="976.500" width="19" height="16.500" fill="#fff" stroke="#111"/>
<path d="M1 977L19 993M19 977L1 993" stroke="#7a2a2a" stroke-width="1.500"/>
<path d="M1915 979L1909 984L1915 989Z" fill="#111"/>
<rect x="17" y="997" width="483" height="14" fill="#cdcdcd"/>
<path d="M10 1000L6 1004L10 1008" fill="none" stroke="#bbb" stroke-width="2"/>
<path d="M1897 1000L1901 1004L1897 1008" fill="none" stroke="#555" stroke-width="2"/>

<!-- status -->
<text x="2.400" y="1023" textLength="66" lengthAdjust="spacingAndGlyphs">Wypełnienie:</text>
<text x="2.400" y="1037" textLength="37" lengthAdjust="spacingAndGlyphs">Kontur:</text>
<text x="89" y="1023" textLength="20" lengthAdjust="spacingAndGlyphs">N/D</text>
<text x="89" y="1037" textLength="20" lengthAdjust="spacingAndGlyphs">N/D</text>
<text x="130" y="1030" textLength="8" lengthAdjust="spacingAndGlyphs">K:</text>
<rect x="140.500" y="1016.500" width="26" height="21" fill="#f3f3f3" stroke="#bbb"/>
<text x="145" y="1031" class="g" textLength="18" lengthAdjust="spacingAndGlyphs">100</text>
<use href="#sp" x="168" y="1017"/>
<rect x="181" y="1011" width="1" height="29" fill="#bbb"/>
<g transform="translate(194,1026)"><path d="M-8 0C-5 -5 5 -5 8 0C5 5 -5 5 -8 0Z" fill="#eee" stroke="#111" stroke-width="1.500"/><circle r="3.500" fill="#111"/><path d="M-6 -4L-8 -7M-3 -5L-4 -8M0 -6V-9M3 -5L4 -8M6 -4L8 -7" stroke="#111" stroke-width="1.200"/></g>
<use href="#lk" x="215.500" y="1027"/>
<rect x="227.500" y="1012.500" width="127" height="26.500" fill="#fff" stroke="#bbb"/>
<rect x="339" y="1013" width="15.500" height="26" fill="#dcdcdc"/>
<path d="M343 1024L347 1028L351 1024" fill="none" stroke="#444" stroke-width="1.500"/>
<text x="231.400" y="1030" textLength="37" lengthAdjust="spacingAndGlyphs" style="font-size:10px;font-weight:bold">•Layer 1</text>
<text x="361" y="1030" textLength="16" lengthAdjust="spacingAndGlyphs" style="font-weight:bold">Alt</text>
<text x="381" y="1030" textLength="598" lengthAdjust="spacingAndGlyphs">+ kliknięcie, aby zaznaczyć zasłonięty obiekt, ciągnięcie, aby przesunąć zaznaczenie lub zaznaczyć przez dotknięcie</text>
<rect x="1761" y="1011" width="1" height="29" fill="#bbb"/>
<text x="1764.500" y="1023">X:</text><text x="1764.500" y="1037">Y:</text>
<text x="1789.400" y="1023" textLength="34.600" style="font-family:'Liberation Mono',monospace;font-size:11px">42,45</text>
<text x="1789.400" y="1037" textLength="34.600" style="font-family:'Liberation Mono',monospace;font-size:11px">56,00</text>
<text x="1834" y="1030">Z:</text>
<rect x="1844.500" y="1015.500" width="43.500" height="21" fill="#fff" stroke="#bbb"/>
<text x="1848" y="1030" textLength="32.600" lengthAdjust="spacingAndGlyphs">1100%</text>
<use href="#sk" x="1890.500" y="1016"/>
<path d="M1917 1027h2v2h-2zM1914 1030h2v2h-2zM1917 1030h2v2h-2zM1911 1033h2v2h-2zM1914 1033h2v2h-2zM1917 1033h2v2h-2z" fill="#bbb"/>
</svg>

<div id="p">
<i style="background:#000"></i><i style="background:#1a1a1a"></i><i style="background:#333"></i><i style="background:#4d4d4d"></i><i style="background:#666"></i><i style="background:#808080"></i><i style="background:#999"></i><i style="background:#b3b3b3"></i><i style="background:#ccc"></i><i style="background:#e6e6e6"></i><i style="background:#ececec"></i><i style="background:#f2f2f2"></i><i style="background:#f9f9f9"></i><i style="background:#fff"></i>
<i style="background:#800000"></i><i style="background:#f00"></i><i style="background:#808000"></i><i style="background:#ff0"></i><i style="background:#008000"></i><i style="background:#0f0"></i><i style="background:#008080"></i><i style="background:#0ff"></i><i style="background:#000080"></i><i style="background:#00f"></i><i style="background:#800080"></i><i style="background:#f0f"></i>
<i style="background:#2b0000"></i><i style="background:#500"></i><i style="background:#800000"></i><i style="background:#a00"></i><i style="background:#d40000"></i><i style="background:#f00"></i><i style="background:#ff2a2a"></i><i style="background:#f55"></i><i style="background:#ff8080"></i><i style="background:#faa"></i><i style="background:#ffd5d5"></i>
<i style="background:#280b0b"></i><i style="background:#501616"></i><i style="background:#782121"></i><i style="background:#a02c2c"></i><i style="background:#c83737"></i><i style="background:#d35f5f"></i><i style="background:#de8787"></i><i style="background:#e9afaf"></i><i style="background:#f4d7d7"></i>
<i style="background:#241c1c"></i><i style="background:#483737"></i><i style="background:#6c5353"></i><i style="background:#916f6f"></i><i style="background:#ac9393"></i><i style="background:#c8b7b7"></i><i style="background:#e3dbdb"></i>
<i style="background:#2b1100"></i><i style="background:#520"></i><i style="background:#803300"></i><i style="background:#a40"></i><i style="background:#d45500"></i><i style="background:#f60"></i><i style="background:#ff7f2a"></i><i style="background:#f95"></i><i style="background:#ffb380"></i><i style="background:#fca"></i><i style="background:#ffe6d5"></i>
<i style="background:#28170b"></i><i style="background:#502d16"></i><i style="background:#784421"></i><i style="background:#a05a2c"></i><i style="background:#c87137"></i><i style="background:#d38d5f"></i><i style="background:#deaa87"></i><i style="background:#e9c6af"></i><i style="background:#f4e3d7"></i>
<i style="background:#241f1c"></i><i style="background:#483e37"></i><i style="background:#6c5d53"></i><i style="background:#917c6f"></i><i style="background:#ac9d93"></i><i style="background:#c8beb7"></i><i style="background:#e3dedb"></i>
<i style="background:#2b2200"></i><i style="background:#540"></i><i style="background:#806600"></i><i style="background:#a80"></i><i style="background:#d4aa00"></i><i style="background:#fc0"></i><i style="background:#ffd42a"></i><i style="background:#fd5"></i><i style="background:#ffe680"></i><i style="background:#fea"></i><i style="background:#fff6d5"></i>
<i style="background:#28220b"></i><i style="background:#504416"></i><i style="background:#786721"></i><i style="background:#a0892c"></i><i style="background:#c8ab37"></i><i style="background:#d3bc5f"></i><i style="background:#decd87"></i><i style="background:#e9ddaf"></i><i style="background:#f4eed7"></i>
<i style="background:#24221c"></i><i style="background:#484537"></i><i style="background:#6c6753"></i><i style="background:#918a6f"></i><i style="background:#aca793"></i><i style="background:#c8c4b7"></i><i style="background:#e3e2db"></i>
<i style="background:#222b00"></i><i style="background:#450"></i><i style="background:#668000"></i><i style="background:#8a0"></i>
</div>
</body></html>
